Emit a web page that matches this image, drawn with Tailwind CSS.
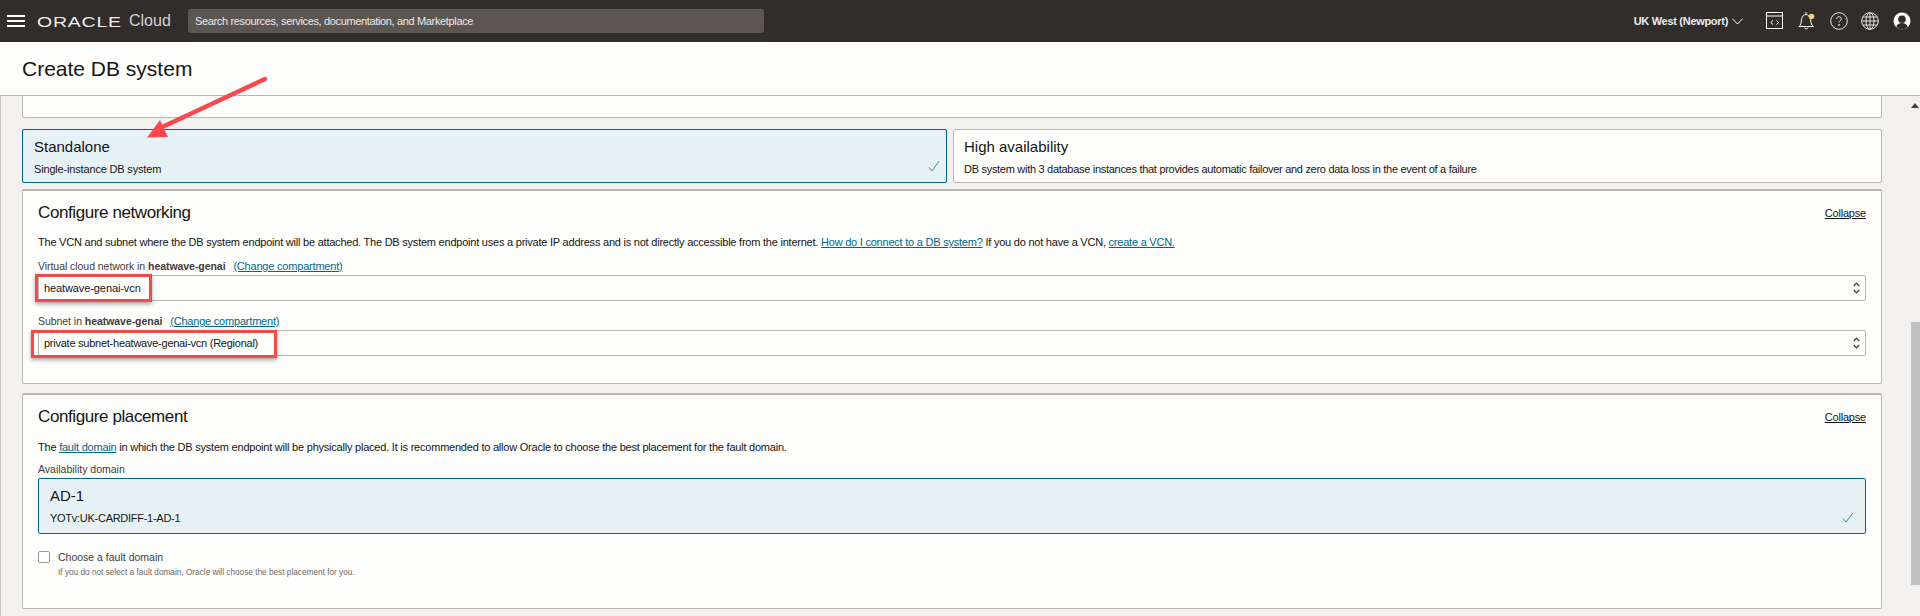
<!DOCTYPE html>
<html lang="en">
<head>
<meta charset="utf-8">
<title>Create DB system</title>
<script src="https://cdn.jsdelivr.net/npm/@tailwindcss/browser@4"></script>
</head>
<body class="m-0 overflow-hidden bg-[#f2f1f0] font-['Liberation_Sans',Arial,sans-serif] text-[#161513]">
<div class="relative flex h-[616px] w-[1920px] flex-col overflow-hidden">
  <header class="flex h-[42px] shrink-0 items-center bg-[#312d2a] text-white">
    <svg class="ml-[7px] h-[12px] w-[18px]" viewBox="0 0 18 12" fill="#fff"><rect width="18" height="2"/><rect y="5" width="18" height="2"/><rect y="10" width="18" height="2"/></svg>
    <span class="ml-[12px] inline-block w-[86px] origin-left scale-x-[1.3] text-[15px] leading-none tracking-[0.6px] text-[#eeeeee]">ORACLE</span>
    <span class="ml-[6px] w-[42px] text-[16px] leading-none text-[#d5d3d1]">Cloud</span>
    <div class="ml-[17px] flex h-[24px] w-[576px] items-center rounded-[2px] bg-[#5b5652] pl-[7px] text-[11px] tracking-[-0.35px] text-[#ece9e6]">Search resources, services, documentation, and Marketplace</div>
    <div class="ml-auto flex items-center">
      <span class="text-[11px] font-bold tracking-[-0.3px] text-[#e6edf2]">UK West (Newport)</span>
      <svg class="ml-[4px] h-[7px] w-[11px]" viewBox="0 0 11 7" fill="none" stroke="#fff" stroke-width="1"><path d="M.5.8 5.5 6l5-5.2"/></svg>
      <svg class="ml-[23px] h-[18px] w-[18px]" viewBox="0 0 18 18" fill="none" stroke="#fff" stroke-width="1"><rect x=".5" y=".5" width="16" height="16"/><path d="M.5 4h16M7 8.500 4.800 10.500 7 12.500M10.500 8.500l2.200 2-2.200 2"/></svg>
      <svg class="ml-[14px] h-[20px] w-[18px]" viewBox="0 0 18 20" fill="none" stroke="#fff" stroke-width="1"><path d="M1 15.500c2-1.500 2-3 2.500-7C4 5 6 3.500 8 3.500s3.500 1.500 4.500 5c.5 4 1 5.500 3 7zM8 1v2.500M6.500 16.500a1.800 1.800 0 0 0 3.500 0"/><circle cx="13.500" cy="5.500" r="2.800" fill="#f7d27e" stroke="none"/></svg>
      <svg class="ml-[14px] h-[18px] w-[18px]" viewBox="0 0 18 18" fill="none" stroke="#e3e3e3" stroke-width="1"><circle cx="9" cy="9" r="8.300"/><path d="M6.700 7c0-1.400 1-2.300 2.300-2.300s2.300.9 2.300 2.100c0 1.700-2.300 1.800-2.300 3.700"/><circle cx="9" cy="13" r=".5" fill="#e3e3e3"/></svg>
      <svg class="ml-[13px] h-[18px] w-[18px]" viewBox="0 0 18 18" fill="none" stroke="#e3e3e3" stroke-width="1"><circle cx="9" cy="9" r="8.300"/><ellipse cx="9" cy="9" rx="4" ry="8.300"/><path d="M9 .7v16.600M.7 9h16.600M1.800 5h14.400M1.800 13h14.400"/></svg>
      <svg class="ml-[14px] mr-[9px] h-[18px] w-[18px]" viewBox="0 0 18 18"><circle cx="9" cy="9" r="8.500" fill="#fff"/><circle cx="9" cy="7.300" r="3.800" fill="#312d2a"/><path d="M3.300 15c.8-3 3-4 5.700-4s4.900 1 5.700 4a8 8 0 0 1-11.400 0z" fill="#312d2a"/></svg>
    </div>
  </header>

  <div class="flex h-[54px] shrink-0 items-center border-b border-[#b8b5b2] bg-[#fdfdfb] pl-[22px] text-[21px]">Create DB system</div>

  <div class="flex min-h-0 flex-1 border-l border-[#c9c7c5]">
    <main class="ml-[21px] w-[1860px] shrink-0">
      <div class="h-[22px] rounded-b-[2px] border border-t-0 border-[#bcb6b1] bg-[#fdfdfb]"></div>

      <div class="mt-[11px] flex gap-[6px]">
        <div class="relative h-[54px] w-[925px] rounded-[2px] border border-[#00688c] bg-[#e6f1f5] pl-[11px]">
          <p class="mt-[7px] text-[15px] leading-[20px]">Standalone</p>
          <p class="mt-[4px] text-[11px] leading-[16px] tracking-[-0.17px]">Single-instance DB system</p>
          <svg class="absolute bottom-[10px] right-[6px] h-[12px] w-[12px]" viewBox="0 0 12 12" fill="none" stroke="#3f8fae" stroke-width="1"><path d="M1 7.500 4 11l7-10"/></svg>
        </div>
        <div class="h-[54px] flex-1 rounded-[2px] border border-[#bcb6b1] bg-[#fdfdfb] pl-[10px]">
          <p class="mt-[7px] text-[15px] leading-[20px]">High availability</p>
          <p class="mt-[4px] text-[11px] leading-[16px] tracking-[-0.29px]">DB system with 3 database instances that provides automatic failover and zero data loss in the event of a failure</p>
        </div>
      </div>

      <section class="mt-[6px] h-[195px] rounded-[2px] border border-t-2 border-[#bcb6b1] bg-[#fdfdfb] px-[15px] pt-[10px]">
        <div class="flex h-[24px] items-center justify-between">
          <h2 class="text-[17px] tracking-[-0.4px]">Configure networking</h2>
          <a class="text-[11px] tracking-[-0.2px] text-[#161513] underline">Collapse</a>
        </div>
        <p class="mt-[9px] h-[16px] text-[11px] leading-[16px] tracking-[-0.225px]">The VCN and subnet where the DB system endpoint will be attached. The DB system endpoint uses a private IP address and is not directly accessible from the internet. <a class="text-[#00688c] underline">How do I connect to a DB system?</a> If you do not have a VCN, <a class="text-[#00688c] underline">create a VCN.</a></p>
        <label class="mt-[8px] block h-[16px] text-[10.5px] leading-[16px] tracking-[-0.05px] text-[#3f3c3a]">Virtual cloud network in <b>heatwave-genai</b> <a class="ml-[5px] text-[11px] leading-[16px] tracking-[-0.2px] text-[#00688c] underline">(Change compartment)</a></label>
        <div class="mt-[1px] flex h-[26px] items-center justify-between rounded-[2px] border border-[#bcb6b1] px-[5px] text-[11px] tracking-[-0.1px]">heatwave-genai-vcn
          <svg class="h-[12px] w-[7px]" viewBox="0 0 7 12" fill="none" stroke="#3a3735" stroke-width="1.200"><path d="M.8 4 3.500 1.200 6.200 4M.8 8l2.700 2.800L6.200 8"/></svg>
        </div>
        <label class="mt-[12px] block h-[16px] text-[10.5px] leading-[16px] tracking-[-0.05px] text-[#3f3c3a]">Subnet in <b>heatwave-genai</b> <a class="ml-[5px] text-[11px] leading-[16px] tracking-[-0.2px] text-[#00688c] underline">(Change compartment)</a></label>
        <div class="mt-[1px] flex h-[26px] items-center justify-between rounded-[2px] border border-[#bcb6b1] px-[5px] text-[11px] tracking-[-0.25px]">private subnet-heatwave-genai-vcn (Regional)
          <svg class="h-[12px] w-[7px]" viewBox="0 0 7 12" fill="none" stroke="#3a3735" stroke-width="1.200"><path d="M.8 4 3.500 1.200 6.200 4M.8 8l2.700 2.800L6.200 8"/></svg>
        </div>
      </section>

      <section class="mt-[9px] h-[216px] rounded-[2px] border border-t-2 border-[#bcb6b1] bg-[#fdfdfb] px-[15px] pt-[10px]">
        <div class="flex h-[24px] items-center justify-between">
          <h2 class="text-[17px] tracking-[-0.4px]">Configure placement</h2>
          <a class="text-[11px] tracking-[-0.2px] text-[#161513] underline">Collapse</a>
        </div>
        <p class="mt-[10px] h-[16px] text-[11px] leading-[16px] tracking-[-0.22px]">The <a class="text-[#00688c] underline">fault domain</a> in which the DB system endpoint will be physically placed. It is recommended to allow Oracle to choose the best placement for the fault domain.</p>
        <label class="mt-[6px] block h-[16px] text-[10.5px] leading-[16px] text-[#3f3c3a]">Availability domain</label>
        <div class="relative mt-[1px] h-[56px] rounded-[2px] border border-[#00688c] bg-[#e6f1f5] pl-[11px]">
          <p class="mt-[7px] text-[15px] leading-[20px]">AD-1</p>
          <p class="mt-[4px] text-[11px] leading-[16px] tracking-[-0.27px]">YOTv:UK-CARDIFF-1-AD-1</p>
          <svg class="absolute bottom-[10px] right-[11px] h-[11px] w-[12px]" viewBox="0 0 12 11" fill="none" stroke="#3f8fae" stroke-width="1"><path d="M1 6.500 4 10l7-9"/></svg>
        </div>
        <div class="mt-[17px] flex items-center">
          <span class="h-[12px] w-[12px] rounded-[2px] border border-[#9b9794] bg-white"></span>
          <span class="ml-[8px] text-[10.5px] leading-[12px] text-[#3f3c3a]">Choose a fault domain</span>
        </div>
        <p class="ml-[20px] mt-[4px] text-[8.25px] leading-[12px] text-[#6f6b67]">If you do not select a fault domain, Oracle will choose the best placement for you.</p>
      </section>
    </main>

    <aside class="relative ml-[22px] flex-1">
      <svg class="absolute left-[7px] top-[7px] h-[5px] w-[8px]" viewBox="0 0 8 5" fill="#45423f"><path d="M4 0 8 5H0z"/></svg>
      <div class="absolute left-[7px] top-[226px] h-[263px] w-[13px] bg-[#c1c1c1]"></div>
    </aside>
  </div>

  <!-- annotations drawn over the screenshot -->
  <svg class="pointer-events-none absolute left-0 top-0 h-[616px] w-[1920px]" viewBox="0 0 1920 616" fill="none">
    <path d="M265 79 158 129" stroke="#f9494f" stroke-width="4.500" stroke-linecap="round"/>
    <path d="M147 137.500 160 120 168 137z" fill="#f9494f"/>
  </svg>
  <div class="pointer-events-none absolute left-[35px] top-[274px] h-[28px] w-[117px] border-[3px] border-[#f04c4c] shadow-[0_2px_4px_rgba(0,0,0,0.35)]"></div>
  <div class="pointer-events-none absolute left-[31px] top-[330px] h-[28px] w-[246px] border-[3px] border-[#f04c4c] shadow-[0_2px_4px_rgba(0,0,0,0.35)]"></div>
</div>
</body>
</html>
